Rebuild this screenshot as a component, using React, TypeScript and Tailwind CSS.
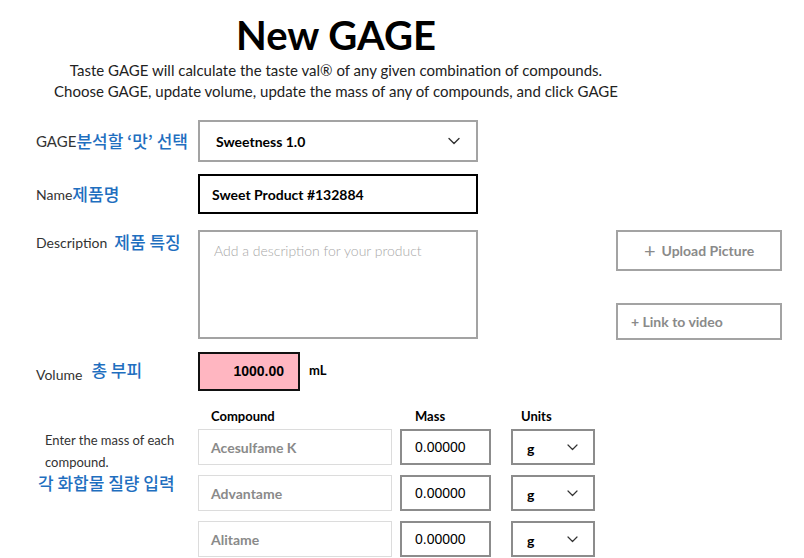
import React from "react";

const Chevron = ({ className = "" }: { className?: string }) => (
  <svg width="12" height="8" viewBox="0 0 12 8" className={className} fill="none">
    <path d="M1 1.5 L6 6.5 L11 1.5" stroke="#333" strokeWidth="1.4" strokeLinecap="round" strokeLinejoin="round" />
  </svg>
);

const SmallChevron = () => (
  <svg width="11" height="7" viewBox="0 0 11 7" fill="none">
    <path d="M1 1 L5.5 5.5 L10 1" stroke="#333" strokeWidth="1.2" strokeLinecap="round" strokeLinejoin="round" />
  </svg>
);

const compounds = ["Acesulfame K", "Advantame", "Alitame"];

const ko = "text-[#1f6fbf] font-['Noto_Sans_CJK_KR',sans-serif] font-medium";

export default function App() {
  return (
    <div className="w-[804px] h-[558px] overflow-hidden bg-white font-['Lato','Noto_Sans_CJK_KR',sans-serif] text-[#111]">
      <div className="w-[672px] text-center pt-[13px]">
        <h1 className="text-[40px] leading-[44px] font-bold text-black">New GAGE</h1>
        <p className="mt-[3px] text-[15px] leading-[21px] text-[#222]">
          Taste GAGE will calculate the taste val® of any given combination of compounds.
          <br />
          Choose GAGE, update volume, update the mass of any of compounds, and click GAGE
        </p>
      </div>

      <div className="pl-[36px] mt-[18px] flex flex-col">
        {/* Row 1 */}
        <div className="flex items-center h-[42px]">
          <div className="w-[162px] flex items-center text-[15px] text-[#333] whitespace-nowrap">
            GAGE<span className={`text-[17px] ${ko}`}>분석할 ‘맛’ 선택</span>
          </div>
          <div className="w-[280px] h-[42px] border-2 border-[#a3a3a3] flex items-center justify-between pl-[16px] pr-[16px]">
            <span className="text-[14px] font-bold text-black">Sweetness 1.0</span>
            <Chevron />
          </div>
        </div>

        {/* Row 2 */}
        <div className="flex items-center h-[40px] mt-[12px]">
          <div className="w-[162px] flex items-center text-[14px] text-[#333]">
            Name<span className={`text-[17px] ${ko}`}>제품명</span>
          </div>
          <div className="w-[280px] h-[40px] border-2 border-black flex items-center pl-[12px]">
            <span className="text-[14px] font-bold text-black">Sweet Product #132884</span>
          </div>
        </div>

        {/* Row 3 */}
        <div className="flex items-start mt-[16px]">
          <div className="w-[162px] flex items-start text-[14px] text-[#333] pt-[1px]">
            <span className="mt-[1px]">Description</span>
            <span className={`ml-[7px] text-[17px] leading-[22px] ${ko}`}>제품 특징</span>
          </div>
          <div className="w-[280px] h-[109px] border-2 border-[#a3a3a3] pl-[14px] pt-[6px]">
            <span className="text-[14px] font-light text-[#a8a8a8]">Add a description for your product</span>
          </div>
          <div className="ml-[138px] flex flex-col gap-[32px]">
            <div className="w-[166px] h-[41px] border-2 border-[#a3a3a3] flex items-center justify-center gap-[6px] text-[14px] font-bold text-[#8a8a8a]">
              <span className="text-[20px] font-normal leading-none -mt-[2px]">+</span>
              <span>Upload Picture</span>
            </div>
            <div className="w-[166px] h-[37px] border-2 border-[#a3a3a3] flex items-center pl-[13px] text-[14px] font-bold text-[#8a8a8a]">
              + Link to video
            </div>
          </div>
        </div>

        {/* Row 4 */}
        <div className="flex items-center h-[39px] mt-[12px]">
          <div className="w-[162px] flex items-center text-[14px] text-[#333]">
            <span className="mt-[6px]">Volume</span>
            <span className={`ml-[9px] -mt-[4px] text-[17px] ${ko}`}>총 부피</span>
          </div>
          <div className="w-[102px] h-[39px] border-2 border-[#111] bg-[#ffb6c1] flex items-center justify-end pr-[14px]">
            <span className="text-[14px] font-bold text-black font-['Liberation_Sans',sans-serif]">1000.00</span>
          </div>
          <span className="ml-[9px] -mt-[2px] text-[13px] font-bold text-black">mL</span>
        </div>

        {/* Table */}
        <div className="flex mt-[16px]">
          <div className="w-[162px] pt-[22px]">
            <p className="pl-[9px] text-[13px] leading-[22px] text-[#333] w-[140px]">
              Enter the mass of each compound.
            </p>
            <p className={`-mt-[3px] pl-[2px] text-[17px] ${ko}`}>
              각 화합물 질량 입력
            </p>
          </div>
          <div className="flex flex-col">
            <div className="flex h-[20px] items-center text-[13px] font-bold text-black">
              <span className="w-[202px] pl-[13px]">Compound</span>
              <span className="w-[111px] pl-[15px]">Mass</span>
              <span className="pl-[10px]">Units</span>
            </div>
            <div className="flex flex-col gap-[10px] mt-[2px]">
              {compounds.map((c) => (
                <div key={c} className="flex items-center h-[36px]">
                  <div className="w-[194px] h-[36px] border border-[#dcdcdc] flex items-center pl-[12px] text-[14px] font-bold text-[#8a8a8a]">
                    {c}
                  </div>
                  <div className="ml-[8px] w-[91px] h-[36px] border-2 border-[#8c8c8c] flex items-center pl-[13px] text-[14px] text-black font-['Liberation_Sans',sans-serif]">
                    0.00000
                  </div>
                  <div className="ml-[20px] w-[84px] h-[36px] border-2 border-[#8c8c8c] flex items-center justify-between pl-[14px] pr-[15px]">
                    <span className="text-[14px] font-bold text-black mt-[2px]">g</span>
                    <SmallChevron />
                  </div>
                </div>
              ))}
            </div>
          </div>
        </div>
      </div>
    </div>
  );
}
